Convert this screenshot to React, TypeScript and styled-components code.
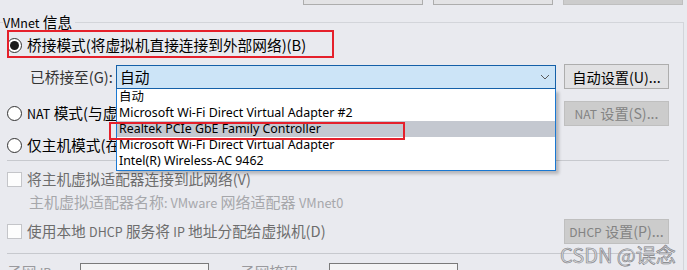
import styled, { createGlobalStyle } from 'styled-components';

const UI_FONT = `"Noto Sans CJK SC", "Noto Sans", sans-serif`;
const LIST_FONT = `"Noto Sans", "Noto Sans CJK SC", sans-serif`;
const BG = '#e9eaef';

const GlobalStyle = createGlobalStyle`
  html, body {
    margin: 0;
    padding: 0;
    background: ${BG};
    overflow: hidden;
  }
  body {
    font-family: ${UI_FONT};
  }
`;

const adapters = [
    '自动',
    'Microsoft Wi-Fi Direct Virtual Adapter #2',
    'Realtek PCIe GbE Family Controller',
    'Microsoft Wi-Fi Direct Virtual Adapter',
    'Intel(R) Wireless-AC 9462',
];

const SELECTED = 2;

const App = () => {
    return (
        <Page>
            <GlobalStyle />
            <TopBar>
                <TopButton />
                <TopButton />
                <TopButton $disabled />
            </TopBar>
            <Group>
                <Legend><Narrow>VMnet</Narrow> 信息</Legend>
                <Content>
                    <Row $h={26} $mt={9}>
                        <Radio $checked />
                        <Label>桥接模式(将虚拟机直接连接到外部网络)(B)</Label>
                    </Row>
                    <Row $h={25} $mt={6}>
                        <FieldLabel>已桥接至(G):</FieldLabel>
                        <Combo>
                            <span>自动</span>
                            <svg width="10" height="6" viewBox="0 0 10 6">
                                <path d="M1 1 L5 5 L9 1" fill="none" stroke="#5a5a5a" strokeWidth="1" />
                            </svg>
                            <DropList>
                                {adapters.map((a, i) => (
                                    <DropItem key={a} $active={i === SELECTED}>{a}</DropItem>
                                ))}
                            </DropList>
                        </Combo>
                        <Button><span>自动设置(U)...</span></Button>
                    </Row>
                    <Row $h={26} $mt={11}>
                        <Radio />
                        <Label><Narrow>NAT</Narrow> 模式(与虚拟机共享主机的 <Narrow>IP</Narrow> 地址)(N)</Label>
                        <Button $disabled><span><Narrow>NAT</Narrow> 设置(S)...</span></Button>
                    </Row>
                    <Row $h={26} $mt={6}>
                        <Radio />
                        <Label>仅主机模式(在专用网络内连接虚拟机)(H)</Label>
                    </Row>
                    <Separator $mt={2} />
                    <Row $h={26} $mt={5}>
                        <Checkbox />
                        <Label $muted>将主机虚拟适配器连接到此网络(V)</Label>
                    </Row>
                    <Row $h={20} $mt={0}>
                        <HintText>主机虚拟适配器名称<Narrow>: VMware</Narrow> 网络适配器 <Narrow>VMnet0</Narrow></HintText>
                    </Row>
                    <Row $h={26} $mt={6}>
                        <Checkbox />
                        <Label $muted>使用本地 <Narrow>DHCP</Narrow> 服务将 <Narrow>IP</Narrow> 地址分配给虚拟机(D)</Label>
                        <Button $disabled><span><Narrow>DHCP</Narrow> 设置(P)...</span></Button>
                    </Row>
                    <Separator $mt={9} />
                    <BottomRow>
                        <BottomLabel $w={73}>子网 <Narrow>IP</Narrow></BottomLabel>
                        <TextBox />
                        <BottomLabel $w={89} $ml={31}>子网掩码</BottomLabel>
                        <TextBox />
                    </BottomRow>
                </Content>
            </Group>
            <Mark style={{ left: 7, top: 30, width: 327, height: 28 }} />
            <Mark style={{ left: 109, top: 122, width: 296, height: 18 }} />
            <Watermark>CSDN @误念</Watermark>
        </Page>
    );
}

const Page = styled.div`
    position: relative;
    width: 687px;
    height: 270px;
    overflow: hidden;
    font-size: 14.7px;
    color: #000;
`;

const Narrow = styled.span`
    font-size: 0.85em;
`;

const TopBar = styled.div`
    display: flex;
    gap: 10px;
    padding-left: 303px;
    height: 5px;
`;

const TopButton = styled.div<{ $disabled?: boolean }>`
    width: 120px;
    height: 5px;
    box-sizing: border-box;
    border: 1px solid ${p => p.$disabled ? '#bfbfbf' : '#adadad'};
    border-top: 0;
    background: ${p => p.$disabled ? '#cccccc' : '#e3e3e5'};
`;

const Group = styled.section`
    position: relative;
    margin-top: 17px;
    width: 684px;
    height: 260px;
    box-sizing: border-box;
    border-top: 1px solid #d3d5da;
    border-right: 1px solid #d3d5da;
`;

const Legend = styled.div`
    position: absolute;
    top: -11px;
    left: 3px;
    padding-right: 3px;
    line-height: 20px;
    background: ${BG};
    white-space: nowrap;
`;

const Content = styled.div`
    display: flex;
    flex-direction: column;
    padding: 0 14px 0 7px;
`;

const Row = styled.div<{ $h: number; $mt: number }>`
    display: flex;
    align-items: center;
    height: ${p => p.$h}px;
    margin-top: ${p => p.$mt}px;
    white-space: nowrap;
`;

const Radio = styled.span<{ $checked?: boolean }>`
    flex: none;
    width: 15px;
    height: 15px;
    box-sizing: border-box;
    border: 1px solid #333;
    border-radius: 50%;
    background: #fff;
    display: flex;
    align-items: center;
    justify-content: center;

    &::after {
        content: '';
        width: 9px;
        height: 9px;
        border-radius: 50%;
        background: ${p => p.$checked ? '#1a1a1a' : 'transparent'};
    }
`;

const Checkbox = styled.span`
    flex: none;
    width: 15px;
    height: 15px;
    box-sizing: border-box;
    border: 1px solid #c4c5c9;
    background: #fdfdfd;
`;

const Label = styled.span<{ $muted?: boolean }>`
    margin-left: 5px;
    line-height: 20px;
    color: ${p => p.$muted ? '#6d6d6d' : '#000'};
`;

const FieldLabel = styled.span`
    width: 109px;
    box-sizing: border-box;
    padding-left: 23px;
    line-height: 20px;
    color: #333;
`;

const Combo = styled.div`
    position: relative;
    align-self: flex-start;
    margin-top: 1px;
    width: 440px;
    height: 24px;
    box-sizing: border-box;
    border: 1px solid #1560a8;
    background: #cce4f7;
    display: flex;
    align-items: center;
    justify-content: space-between;
    padding: 0 5px 0 3px;
    line-height: 20px;
    z-index: 2;
`;

const DropList = styled.div`
    position: absolute;
    top: calc(100% + 1px);
    left: -1px;
    width: 440px;
    height: 82px;
    box-sizing: border-box;
    border: 1px solid #1a78d2;
    border-top: 0;
    background: #fff;
    box-shadow: 3px 3px 3px rgba(0, 0, 0, 0.22);
    display: flex;
    flex-direction: column;
    font-family: ${LIST_FONT};
`;

const DropItem = styled.div<{ $active: boolean }>`
    height: 16px;
    line-height: 16px;
    padding-left: 2px;
    font-size: 12.4px;
    background: ${p => p.$active ? '#c4c8d0' : 'transparent'};
    white-space: nowrap;
    overflow: hidden;
`;

const Button = styled.div<{ $disabled?: boolean }>`
    margin-left: auto;
    flex: none;
    width: 105px;
    height: 25px;
    box-sizing: border-box;
    border: 1px solid ${p => p.$disabled ? '#bfbfbf' : '#adadad'};
    background: ${p => p.$disabled ? '#cccccc' : '#e1e1e3'};
    color: ${p => p.$disabled ? '#838383' : '#000'};
    display: flex;
    align-items: center;
    justify-content: center;
    font-size: 14.2px;
    line-height: 20px;
    white-space: nowrap;
`;

const Separator = styled.div<{ $mt: number }>`
    height: 1px;
    margin-top: ${p => p.$mt}px;
    background: #c7c9ce;
`;

const HintText = styled.span`
    padding-left: 22px;
    line-height: 20px;
    font-size: 15px;
    color: #a6a7ab;
`;

const BottomRow = styled.div`
    display: flex;
    align-items: flex-start;
    margin-top: 9px;
    height: 24px;
`;

const BottomLabel = styled.span<{ $w: number; $ml?: number }>`
    width: ${p => p.$w}px;
    margin-left: ${p => p.$ml ?? 0}px;
    margin-top: -1px;
    line-height: 20px;
    color: #9a9a9e;
`;

const TextBox = styled.div`
    width: 129px;
    height: 24px;
    box-sizing: border-box;
    border: 1px solid #7a7a7a;
    background: #f4f4f5;
`;

const Mark = styled.div`
    position: absolute;
    box-sizing: border-box;
    border: 2px solid #e5202b;
    z-index: 5;
`;

const Watermark = styled.div`
    position: absolute;
    left: 560px;
    top: 243px;
    font-size: 20px;
    line-height: 24px;
    color: #d6d7db;
    -webkit-text-stroke: 0.6px #7e7f84;
    white-space: nowrap;
    z-index: 6;
`;

export default App;
